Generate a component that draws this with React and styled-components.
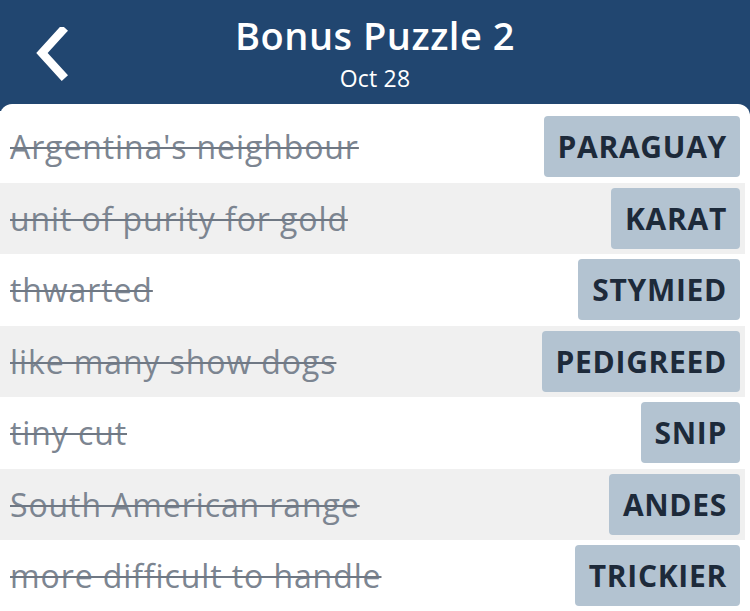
import React from "react";
import styled, { createGlobalStyle } from "styled-components";

const Global = createGlobalStyle`
  html, body { margin: 0; padding: 0; background: #214670; }
  body { font-family: "Open Sans", "Noto Sans", sans-serif; overflow: hidden; }
`;

const Page = styled.div`
  width: 750px;
  height: 611px;
  display: flex;
  flex-direction: column;
  background: #214670;
  overflow: hidden;
`;

const Header = styled.header`
  height: 104px;
  flex: none;
  display: grid;
  grid-template-columns: 100px 1fr 100px;
  align-items: center;
`;

const Back = styled.button`
  background: none;
  border: 0;
  padding: 0 0 0 34px;
  height: 104px;
  display: flex;
  align-items: flex-start;
  padding-top: 27px;
  cursor: pointer;
`;

const Titles = styled.div`
  display: flex;
  flex-direction: column;
  align-items: center;
  color: #fff;
  padding-bottom: 2px;
`;

const Title = styled.h1`
  margin: 0;
  font-size: 38px;
  font-weight: 600;
  line-height: 48px;
  letter-spacing: 0.5px;
`;

const Sub = styled.div`
  font-size: 23px;
  line-height: 28px;
  margin-top: 5px;
  letter-spacing: 0.2px;
`;

const Panel = styled.main`
  flex: 1;
  background: #fff;
  border-radius: 12px 12px 0 0;
  padding-top: 7px;
  display: flex;
  flex-direction: column;
`;

const Row = styled.div`
  height: 71.5px;
  flex: none;
  display: flex;
  align-items: center;
  justify-content: space-between;
  background: ${(p) => (p.$alt ? "#f0f0f0" : "#fff")};
  padding: 0 5px 0 10px;
  margin-right: 5px;
`;

const Clue = styled.span`
  font-size: 32px;
  color: #7c8591;
  text-decoration: line-through;
  text-decoration-thickness: 2px;
  text-decoration-color: #6f7884;
  white-space: nowrap;
  letter-spacing: 0.9px;
`;

const Answer = styled.span`
  height: 61px;
  display: flex;
  align-items: center;
  padding: 0 13px 0 14px;
  background: #b3c3d1;
  border-radius: 4px;
  color: #1d2a3a;
  font-size: 30px;
  font-weight: 700;
  letter-spacing: 0.7px;
`;

const rows = [
  ["Argentina's neighbour", "PARAGUAY"],
  ["unit of purity for gold", "KARAT"],
  ["thwarted", "STYMIED"],
  ["like many show dogs", "PEDIGREED"],
  ["tiny cut", "SNIP"],
  ["South American range", "ANDES"],
  ["more difficult to handle", "TRICKIER"],
];

export default function App() {
  return (
    <Page>
      <Global />
      <Header>
        <Back aria-label="Back">
          <svg width="40" height="54" viewBox="0 0 40 54">
            <polyline
              points="28,4 8,26 28,48"
              fill="none"
              stroke="#fff"
              strokeWidth="8.5"
              strokeLinecap="square"
              strokeLinejoin="miter"
            />
          </svg>
        </Back>
        <Titles>
          <Title>Bonus Puzzle 2</Title>
          <Sub>Oct 28</Sub>
        </Titles>
        <div />
      </Header>
      <Panel>
        {rows.map(([c, a], i) => (
          <Row key={c} $alt={i % 2 === 1}>
            <Clue>{c}</Clue>
            <Answer>{a}</Answer>
          </Row>
        ))}
      </Panel>
    </Page>
  );
}
